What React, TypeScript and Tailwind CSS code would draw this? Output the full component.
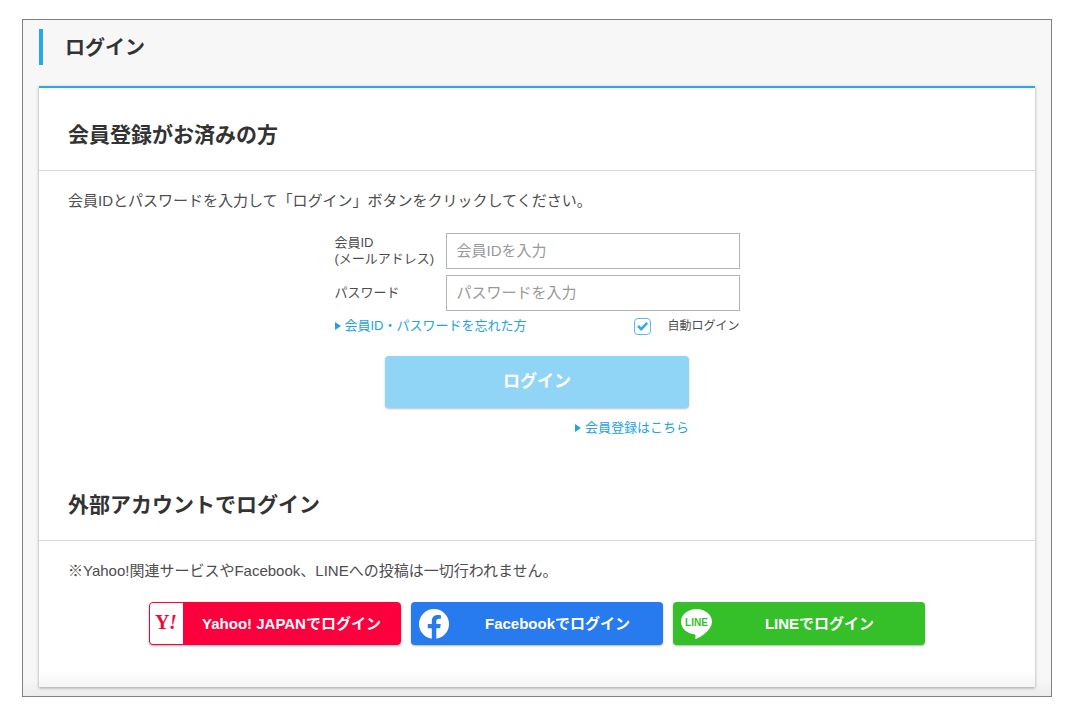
import React, { useState } from 'react';
import { clsx } from 'clsx';

interface SectionHeadingProps {
  children: React.ReactNode;
  className?: string;
}

const SectionHeading: React.FC<SectionHeadingProps> = ({ children, className }) => (
  <h2
    className={clsx(
      'border-b border-[#d9d9d9] px-[29px] pb-[19px] text-[21px] leading-8 font-bold text-[#333]',
      className
    )}
  >
    {children}
  </h2>
);

interface ArrowLinkProps {
  href: string;
  children: React.ReactNode;
}

const ArrowLink: React.FC<ArrowLinkProps> = ({ href, children }) => (
  <a href={href} className="inline-flex items-center gap-1 text-[#22a2e3] hover:underline">
    <svg className="h-2 w-[6px]" viewBox="0 0 6 8" fill="currentColor" aria-hidden="true">
      <path d="M0 0l6 4-6 4z" />
    </svg>
    {children}
  </a>
);

interface TextFieldProps {
  id: string;
  type: string;
  label: React.ReactNode;
  placeholder: string;
  value: string;
  onChange: (value: string) => void;
}

const TextField: React.FC<TextFieldProps> = ({ id, type, label, placeholder, value, onChange }) => (
  <div className="flex items-center">
    <label htmlFor={id} className="w-[111px] shrink-0 leading-4">
      {label}
    </label>
    <input
      id={id}
      type={type}
      value={value}
      placeholder={placeholder}
      onChange={(e) => onChange(e.target.value)}
      className="h-9 min-w-0 flex-1 border border-[#b3b3b3] bg-white px-2.5 pb-0.5 text-[15px] placeholder:text-[#999] focus:border-[#27a8e8] focus:outline-none"
    />
  </div>
);

const YahooMark = () => (
  <svg className="h-full w-full" viewBox="0 0 33 41" aria-hidden="true">
    <g fill="#ee0a3a" fontFamily="Liberation Serif, serif" fontWeight="bold" fontSize="20">
      <text x="5" y="26">Y</text>
      <text x="19" y="26" fontStyle="italic">!</text>
    </g>
  </svg>
);

const FacebookMark = () => (
  <svg className="size-[30px]" viewBox="0 0 30 30" aria-hidden="true">
    <circle cx="15" cy="15" r="15" fill="#fff" />
    <path
      d="M12.800 30V19.300H8.800v-4.200h4v-2.900c0-4.300 2.400-6.300 5.900-6.300 1.200 0 2.200.1 3.200.3v3.600h-1.900c-2 0-2.700 1-2.700 2.600v2.700h4.500l-.7 4.200h-3.800V30z"
      fill="#287bee"
    />
  </svg>
);

const LineMark = () => (
  <svg className="h-[30px] w-[31px]" viewBox="0 0 31 30" aria-hidden="true">
    <path
      d="M15.500 0C7 0 0 5.600 0 12.700c0 6.300 5.500 11.500 13 12.500 1 .2 1.600.5 1.500 1.700l-.2 2.200c0 .8.400 1.100 1.200.7C20 27.600 31 21 31 12.700 31 5.600 24 0 15.500 0z"
      fill="#fff"
    />
    <text
      x="15.500"
      y="16.500"
      fontSize="10"
      fontWeight="bold"
      fontFamily="Liberation Sans, sans-serif"
      textAnchor="middle"
      fill="#35c02a"
    >
      LINE
    </text>
  </svg>
);

interface SocialButtonProps {
  icon: React.ReactNode;
  label: string;
  className: string;
  iconClassName: string;
}

const SocialButton: React.FC<SocialButtonProps> = ({ icon, label, className, iconClassName }) => (
  <button
    type="button"
    className={clsx(
      'flex h-[43px] w-[252px] cursor-pointer items-stretch overflow-hidden rounded text-[15px] font-bold text-white shadow-[0_1px_2px_rgba(0,0,0,0.3)]',
      className
    )}
  >
    <span className={clsx('flex shrink-0 items-center', iconClassName)}>{icon}</span>
    <span className="flex flex-1 items-center justify-center pt-0.5 whitespace-nowrap">{label}</span>
  </button>
);

export default function App() {
  const [memberId, setMemberId] = useState('');
  const [password, setPassword] = useState('');
  const [autoLogin, setAutoLogin] = useState(true);

  return (
    <main
      lang="ja"
      className="mx-[22px] mt-[19px] mb-6 border border-[#808080] bg-[#f7f7f7] bg-linear-to-t from-[#ececec] to-[#f7f7f7] to-[16px] px-4 pt-[9px] pb-[9px] font-['Liberation_Sans','Noto_Sans_CJK_JP',sans-serif] text-[13px] text-[#4d4d4d]"
    >
      <h1 className="border-l-4 border-[#27a8e8] pt-0.5 pl-[22px] text-xl leading-[34px] font-bold text-[#333]">
        ログイン
      </h1>

      <div className="mt-[21px] border-t-2 border-[#27a8e8] bg-linear-to-t from-[#f4f4f4] to-white to-[16px] pb-[42px] shadow-[0_1px_3px_rgba(0,0,0,0.35)]">
        {/* Member login */}
        <section>
          <SectionHeading className="pt-[31px]">会員登録がお済みの方</SectionHeading>
          <p className="px-[29px] pt-5 text-[15px] leading-5">
            会員IDとパスワードを入力して「ログイン」ボタンをクリックしてください。
          </p>

          <form
            className="mx-auto mt-[22px] flex w-full max-w-[405px] flex-col gap-1.5"
            onSubmit={(e) => e.preventDefault()}
          >
            <TextField
              id="member-id"
              type="text"
              label={
                <>
                  会員ID
                  <br />
                  (メールアドレス)
                </>
              }
              placeholder="会員IDを入力"
              value={memberId}
              onChange={setMemberId}
            />
            <TextField
              id="password"
              type="password"
              label="パスワード"
              placeholder="パスワードを入力"
              value={password}
              onChange={setPassword}
            />
            <div className="flex items-center justify-between leading-[18px]">
              <ArrowLink href="#reminder">会員ID・パスワードを忘れた方</ArrowLink>
              <label className="flex cursor-pointer items-center gap-4 text-xs leading-[18px]">
                <span className="grid">
                  <input
                    type="checkbox"
                    checked={autoLogin}
                    onChange={(e) => setAutoLogin(e.target.checked)}
                    className="peer col-start-1 row-start-1 size-[17px] cursor-pointer appearance-none rounded border border-[#5db8ec] bg-white"
                  />
                  <svg
                    className="pointer-events-none col-start-1 row-start-1 size-[17px] opacity-0 peer-checked:opacity-100"
                    viewBox="0 0 17 17"
                    fill="none"
                    stroke="#35a8e8"
                    strokeWidth="2.500"
                    aria-hidden="true"
                  >
                    <path d="M4 8l3.200 3.200 6-6.400" />
                  </svg>
                </span>
                自動ログイン
              </label>
            </div>

            <div className="mx-auto mt-[15px] flex w-full max-w-[304px] flex-col items-end">
              <button
                type="submit"
                className="h-[52px] w-full cursor-pointer rounded bg-[#90d5f5] text-[17px] font-bold text-white shadow-[0_1px_2px_rgba(0,0,0,0.25)]"
              >
                ログイン
              </button>
              <div className="mt-[11px] flex leading-[18px]">
                <ArrowLink href="#register">会員登録はこちら</ArrowLink>
              </div>
            </div>
          </form>
        </section>

        {/* External accounts */}
        <section className="mt-[52px]">
          <SectionHeading>外部アカウントでログイン</SectionHeading>
          <p className="px-[29px] pt-5 text-[15px] leading-5">
            ※Yahoo!関連サービスやFacebook、LINEへの投稿は一切行われません。
          </p>
          <div className="mt-[21px] flex flex-wrap justify-center gap-2.5">
            <SocialButton
              label="Yahoo! JAPANでログイン"
              className="border border-[#ff0033] bg-[#fb003c]"
              iconClassName="w-[33px] bg-white"
              icon={<YahooMark />}
            />
            <SocialButton
              label="Facebookでログイン"
              className="bg-[#287bee]"
              iconClassName="w-[41px] pl-2"
              icon={<FacebookMark />}
            />
            <SocialButton
              label="LINEでログイン"
              className="bg-[#35c02a]"
              iconClassName="w-[41px] pl-2"
              icon={<LineMark />}
            />
          </div>
        </section>
      </div>
    </main>
  );
}
